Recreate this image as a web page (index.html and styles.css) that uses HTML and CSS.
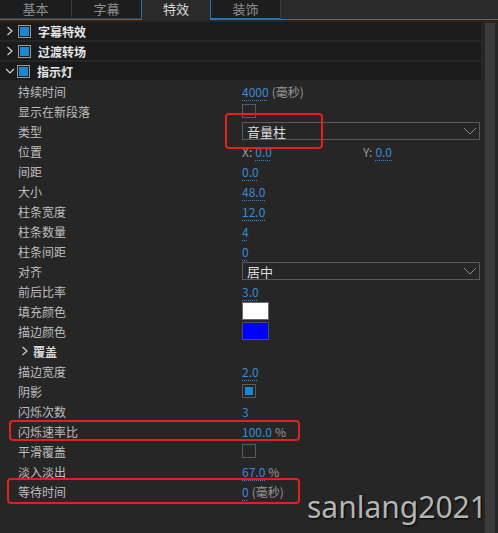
FILE: index.html
```html
<!DOCTYPE html>
<html lang="zh-CN">

<head>
    <meta charset="UTF-8">
    <meta name="viewport" content="width=device-width, initial-scale=1.0">
    <title>特效</title>
    <link rel="stylesheet" href="styles.css">
</head>

<body>
    <div class="window">
        <!-- Tabs -->
        <div class="tabs">
            <div class="tab">基本</div>
            <div class="tab">字幕</div>
            <div class="tab active">特效</div>
            <div class="tab">装饰</div>
        </div>

        <div class="panel">
            <div class="content">
                <!-- Sections -->
                <div class="section">
                    <svg class="arrow" width="8" height="10" viewBox="0 0 8 10"><path d="M1.5 1 L6 5 L1.5 9" /></svg>
                    <span class="section-box"><span></span></span>
                    <span class="section-title">字幕特效</span>
                </div>
                <div class="section">
                    <svg class="arrow" width="8" height="10" viewBox="0 0 8 10"><path d="M1.5 1 L6 5 L1.5 9" /></svg>
                    <span class="section-box"><span></span></span>
                    <span class="section-title">过渡转场</span>
                </div>
                <div class="section">
                    <svg class="arrow" width="10" height="8" viewBox="0 0 10 8"><path d="M1 2 L5 6 L9 2" /></svg>
                    <span class="section-box"><span></span></span>
                    <span class="section-title">指示灯</span>
                </div>

                <!-- Properties -->
                <div class="props">
                    <div class="row"><span class="label">持续时间</span><span class="value"><span class="num">4000</span><span class="unit">(毫秒)</span></span></div>
                    <div class="row"><span class="label">显示在新段落</span><span class="value"><span class="check"></span></span></div>
                    <div class="row"><span class="label">类型</span><span class="value">
                        <span class="select">音量柱<svg class="chev" width="14" height="8" viewBox="0 0 14 8"><path d="M1 1 L7 7 L13 1" /></svg></span>
                    </span></div>
                    <div class="row"><span class="label">位置</span><span class="value pos">
                        <span class="coord"><span class="axis">X:</span><span class="num">0.0</span></span>
                        <span class="coord"><span class="axis">Y:</span><span class="num">0.0</span></span>
                    </span></div>
                    <div class="row"><span class="label">间距</span><span class="value"><span class="num">0.0</span></span></div>
                    <div class="row"><span class="label">大小</span><span class="value"><span class="num">48.0</span></span></div>
                    <div class="row"><span class="label">柱条宽度</span><span class="value"><span class="num">12.0</span></span></div>
                    <div class="row"><span class="label">柱条数量</span><span class="value"><span class="num">4</span></span></div>
                    <div class="row"><span class="label">柱条间距</span><span class="value"><span class="num">0</span></span></div>
                    <div class="row"><span class="label">对齐</span><span class="value">
                        <span class="select">居中<svg class="chev" width="14" height="8" viewBox="0 0 14 8"><path d="M1 1 L7 7 L13 1" /></svg></span>
                    </span></div>
                    <div class="row"><span class="label">前后比率</span><span class="value"><span class="num">3.0</span></span></div>
                    <div class="row"><span class="label">填充颜色</span><span class="value"><span class="swatch white"></span></span></div>
                    <div class="row"><span class="label">描边颜色</span><span class="value"><span class="swatch blue"></span></span></div>
                    <div class="row"><span class="label sub">
                        <svg class="sub-arrow" width="8" height="10" viewBox="0 0 8 10"><path d="M1.5 1 L6 5 L1.5 9" /></svg>覆盖</span></div>
                    <div class="row"><span class="label">描边宽度</span><span class="value"><span class="num">2.0</span></span></div>
                    <div class="row"><span class="label">阴影</span><span class="value"><span class="check on"><span></span></span></span></div>
                    <div class="row"><span class="label">闪烁次数</span><span class="value"><span class="num">3</span></span></div>
                    <div class="row"><span class="label">闪烁速率比</span><span class="value"><span class="num">100.0</span><span class="unit">%</span></span></div>
                    <div class="row"><span class="label">平滑覆盖</span><span class="value"><span class="check"></span></span></div>
                    <div class="row"><span class="label">淡入淡出</span><span class="value"><span class="num">67.0</span><span class="unit">%</span></span></div>
                    <div class="row"><span class="label">等待时间</span><span class="value"><span class="num">0</span><span class="unit">(毫秒)</span></span></div>
                </div>
            </div>
            <div class="scrollbar"><div class="thumb"></div></div>
        </div>

        <!-- Annotations drawn over the screenshot -->
        <div class="mark mark-type"></div>
        <div class="mark mark-rate"></div>
        <div class="mark mark-wait"></div>
        <div class="watermark">sanlang2021</div>
    </div>
</body>

</html>
```

FILE: styles.css
```css
body {
    margin: 0;
    padding: 0;
    background-color: #262626;
    font-family: "Noto Sans CJK SC", "Noto Sans", sans-serif;
    font-size: 12px;
    color: #c4c4c4;
}

.window {
    position: relative;
    width: 498px;
    height: 533px;
    overflow: hidden;
}

.tabs {
    display: flex;
    height: 19px;
    border-bottom: 1px solid #2d74b0;
    background-color: #2a2a2a;
}

.tab {
    width: 69px;
    height: 18px;
    line-height: 18px;
    text-align: center;
    font-size: 13px;
    color: #8e8e8e;
    background-color: #1d1d1d;
    border-right: 1px solid #3a3a3a;
    border-bottom: 1px solid #3a3a3a;
}

.tab:first-child {
    width: 71px;
}

.tab:nth-child(2) {
    border-right-color: #2d74b0;
}

.tab.active {
    width: 68px;
    color: #d8d8d8;
    background-color: #2a2a2a;
    border-right: 1px solid #2d74b0;
    border-bottom: none;
    height: 20px;
    margin-bottom: -1px;
    position: relative;
}

.tab:last-child {
    border-bottom-color: #2d74b0;
}

.panel {
    display: flex;
    padding-top: 2px;
}

.content {
    width: 481px;
}

.section {
    display: flex;
    align-items: center;
    height: 18px;
    margin-bottom: 2px;
    background-color: #1b1b1b;
}

.arrow {
    width: 10px;
    margin-left: 5px;
    fill: none;
    stroke: #d0d0d0;
    stroke-width: 1.2;
}

.section:nth-child(-n+2) .arrow {
    width: 8px;
    margin-left: 6px;
    margin-right: 2px;
}

.section-box {
    display: flex;
    align-items: center;
    justify-content: center;
    box-sizing: border-box;
    width: 13px;
    height: 13px;
    margin-left: 2px;
    border: 1px solid #9a9a9a;
}

.section-box span {
    width: 9px;
    height: 9px;
    background-color: #1b88d6;
}

.section-title {
    margin-left: 7px;
    font-weight: bold;
    color: #e6e6e6;
}

.props {
    margin-top: -1px;
}

.row {
    display: grid;
    grid-template-columns: 242px 1fr;
    align-items: center;
    height: 20px;
}

.label {
    padding-left: 18px;
    color: #bebebe;
}

.label.sub {
    display: flex;
    align-items: center;
    padding-left: 21px;
    font-weight: bold;
    color: #d8d8d8;
}

.sub-arrow {
    margin-right: 4px;
    fill: none;
    stroke: #d0d0d0;
    stroke-width: 1.2;
}

.value {
    display: flex;
    align-items: center;
}

.num {
    color: #3a8ad2;
    text-decoration: underline dotted #3a8ad2;
    text-underline-offset: 3px;
}

.unit {
    margin-left: 3px;
    color: #9a9a9a;
}

.axis {
    margin-right: 3px;
    color: #9a9a9a;
}

.pos .coord {
    width: 121px;
}

.check {
    display: flex;
    align-items: center;
    justify-content: center;
    box-sizing: border-box;
    width: 14px;
    height: 14px;
    border: 1px solid #5a5a5a;
}

.check.on span {
    width: 8px;
    height: 8px;
    background-color: #1b88d6;
}

.select {
    display: flex;
    align-items: center;
    justify-content: space-between;
    box-sizing: border-box;
    width: 238px;
    height: 18px;
    padding: 0 2px 0 4px;
    border: 1px solid #5a5a5a;
    color: #dcdcdc;
    font-size: 13px;
}

.chev {
    fill: none;
    stroke: #8a8a8a;
    stroke-width: 1;
}

.swatch {
    box-sizing: border-box;
    width: 27px;
    height: 18px;
    border: 1px solid #6a6a6a;
}

.swatch.white {
    background-color: #ffffff;
}

.swatch.blue {
    background-color: #0000ff;
    border-color: #4a4a6a;
}

.scrollbar {
    width: 17px;
    padding-left: 4px;
}

.thumb {
    width: 10px;
    height: 520px;
    margin-top: 1px;
    background-color: #3b3b3b;
}

.mark {
    position: absolute;
    border: 2px solid #e3201e;
    border-radius: 4px;
}

.mark-type {
    left: 225px;
    top: 113px;
    width: 94px;
    height: 32px;
}

.mark-rate {
    left: 9px;
    top: 420px;
    width: 287px;
    height: 17px;
}

.mark-wait {
    left: 7px;
    top: 478px;
    width: 289px;
    height: 22px;
}

.watermark {
    position: absolute;
    left: 307px;
    top: 486px;
    font-family: "Noto Sans", sans-serif;
    font-size: 30px;
    color: #b4b4b4;
    text-shadow: 1px 1px 2px #000000;
}
```
